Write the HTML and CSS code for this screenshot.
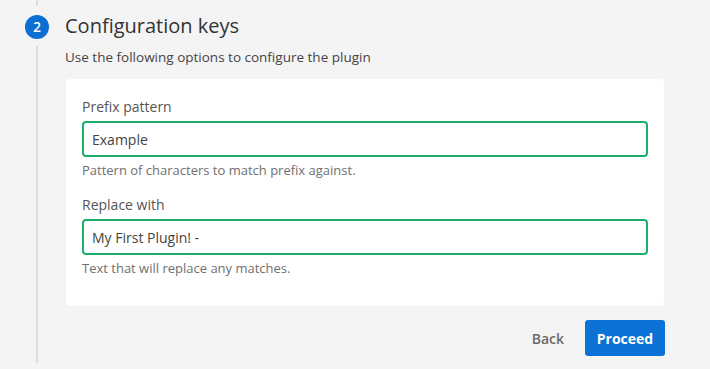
FILE: index.html
```html
<!DOCTYPE html>
<html lang="en">
<head>
    <meta charset="UTF-8">
    <meta name="viewport" content="width=device-width, initial-scale=1.0">
    <title>Configuration keys</title>
    <link rel="stylesheet" href="styles.css">
</head>
<body>
    <div class="step">
        <div class="rail">
            <div class="line line-top"></div>
            <div class="step-number">2</div>
            <div class="line line-rest"></div>
        </div>
        <div class="step-content">
            <h2 class="step-title">Configuration keys</h2>
            <p class="step-desc">Use the following options to configure the plugin</p>
            <div class="card">
                <div class="field">
                    <label for="prefix" class="field-label">Prefix pattern</label>
                    <input type="text" id="prefix" class="input-field" value="Example">
                    <div class="field-help">Pattern of characters to match prefix against.</div>
                </div>
                <div class="field">
                    <label for="replace" class="field-label">Replace with</label>
                    <input type="text" id="replace" class="input-field" value="My First Plugin! -">
                    <div class="field-help">Text that will replace any matches.</div>
                </div>
            </div>
            <div class="actions">
                <button class="btn btn-back">Back</button>
                <button class="btn btn-primary">Proceed</button>
            </div>
        </div>
    </div>
</body>
</html>
```

FILE: styles.css
```css
body {
    font-family: "Open Sans", "Liberation Sans", Arial, sans-serif;
    margin: 0;
    padding: 0;
    background-color: #f4f4f4;
    color: #333;
}

.step {
    display: flex;
    height: 363px;
}

.rail {
    width: 24px;
    margin-left: 25px;
    display: flex;
    flex-direction: column;
    align-items: center;
}

.line {
    width: 2px;
    background-color: #dcdcdc;
}

.line-top {
    height: 6px;
}

.line-rest {
    flex: 1;
}

.step-number {
    width: 24px;
    height: 24px;
    margin: 9px 0 7px;
    border-radius: 50%;
    background-color: #0b6fd3;
    color: #fff;
    font-size: 14px;
    font-weight: 600;
    line-height: 24px;
    text-align: center;
}

.step-content {
    width: 600px;
    margin-left: 16px;
    padding-top: 12px;
}

.step-title {
    margin: 0;
    font-size: 20px;
    font-weight: 400;
    line-height: 28px;
    color: #333;
}

.step-desc {
    margin: 7px 0 12px;
    font-size: 13.5px;
    line-height: 20px;
    color: #444;
}

.card {
    margin: 0 1px;
    padding: 20px 16px 29px;
    background-color: #fff;
    border-radius: 4px;
}

.field + .field {
    margin-top: 18px;
}

.field-label {
    display: block;
    margin-bottom: 6px;
    font-size: 14px;
    font-weight: 400;
    line-height: 16px;
    color: #555;
}

.input-field {
    display: block;
    box-sizing: border-box;
    width: 100%;
    height: 36px;
    padding: 0 8px;
    border: 2px solid #1eae6c;
    border-radius: 4px;
    font-family: inherit;
    font-size: 14px;
    color: #444;
    outline: none;
}

.field-help {
    margin-top: 4px;
    font-size: 13px;
    line-height: 18px;
    color: #707070;
}

.actions {
    display: flex;
    justify-content: flex-end;
    gap: 5px;
    margin-top: 14px;
}

.btn {
    height: 36px;
    padding: 0 16px;
    border: none;
    border-radius: 3px;
    font-family: inherit;
    font-size: 14px;
    font-weight: 600;
    cursor: pointer;
}

.btn-back {
    background: none;
    color: #6b6b6b;
}

.btn-primary {
    width: 80px;
    padding: 0;
    background-color: #0b72d6;
    color: #fff;
    font-weight: 700;
}
```
